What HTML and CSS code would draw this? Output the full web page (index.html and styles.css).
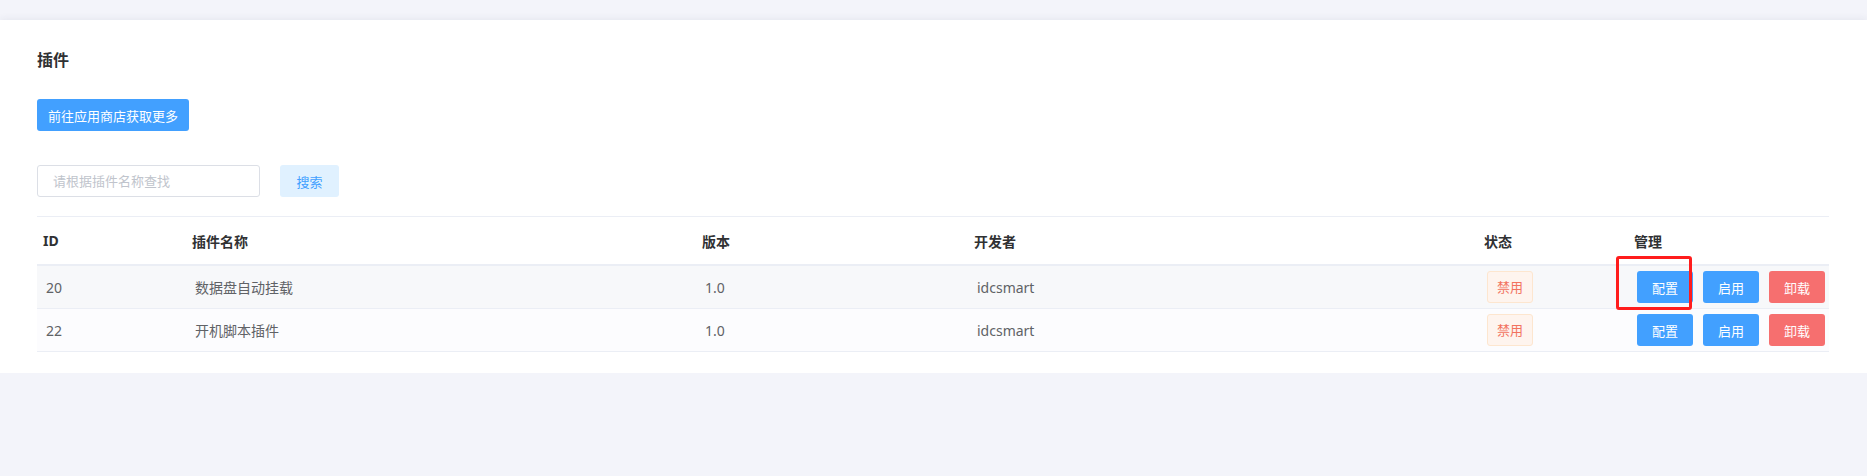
FILE: index.html
```html
<!DOCTYPE html>
<html>
<head>
  <meta charset="utf-8">
  <title>插件</title>
  <link rel="stylesheet" href="styles.css">
</head>
<body>
  <div class="card">
    <h1 class="title">插件</h1>
    <button class="btn btn-primary btn-store">前往应用商店获取更多</button>
    <div class="search-bar">
      <input type="text" class="search-input" placeholder="请根据插件名称查找">
      <button class="btn btn-search">搜索</button>
    </div>
    <table class="plugin-table">
      <colgroup>
        <col style="width: 149px">
        <col style="width: 510px">
        <col style="width: 272px">
        <col style="width: 510px">
        <col style="width: 150px">
        <col>
      </colgroup>
      <thead>
        <tr>
          <th>ID</th>
          <th>插件名称</th>
          <th>版本</th>
          <th>开发者</th>
          <th>状态</th>
          <th>管理</th>
        </tr>
      </thead>
      <tbody>
        <tr class="row-hover">
          <td>20</td>
          <td>数据盘自动挂载</td>
          <td>1.0</td>
          <td>idcsmart</td>
          <td><span class="tag-off">禁用</span></td>
          <td>
            <div class="actions">
              <span class="marked">
                <button class="btn btn-primary btn-small">配置</button>
                <span class="mark-box"></span>
              </span>
              <button class="btn btn-primary btn-small">启用</button>
              <button class="btn btn-danger btn-small">卸载</button>
            </div>
          </td>
        </tr>
        <tr>
          <td>22</td>
          <td>开机脚本插件</td>
          <td>1.0</td>
          <td>idcsmart</td>
          <td><span class="tag-off">禁用</span></td>
          <td>
            <div class="actions">
              <button class="btn btn-primary btn-small">配置</button>
              <button class="btn btn-primary btn-small">启用</button>
              <button class="btn btn-danger btn-small">卸载</button>
            </div>
          </td>
        </tr>
      </tbody>
    </table>
  </div>
</body>
</html>
```

FILE: styles.css
```css
body {
  margin: 0;
  padding-top: 20px;
  background-color: #f3f4fa;
  font-family: "Noto Sans", "Noto Sans CJK SC", sans-serif;
  color: #606266;
}

.card {
  background-color: #fff;
  padding: 28px 38px 21px 37px;
  box-shadow: 0 0 8px rgba(40, 50, 90, 0.09);
}

.title {
  margin: 0;
  font-size: 16px;
  line-height: 24px;
  font-weight: bold;
  color: #303133;
}

.btn {
  border: none;
  border-radius: 3px;
  font-family: inherit;
  cursor: pointer;
  padding: 0;
}

.btn-primary {
  background-color: #42a0ff;
  color: #fff;
}

.btn-danger {
  background-color: #f66f6f;
  color: #fff;
}

.btn-store {
  display: block;
  margin-top: 27px;
  width: 152px;
  height: 32px;
  font-size: 13px;
}

.search-bar {
  display: flex;
  gap: 20px;
  margin-top: 34px;
  margin-bottom: 19px;
}

.search-input {
  box-sizing: border-box;
  width: 223px;
  height: 32px;
  padding: 0 15px;
  border: 1px solid #dcdfe6;
  border-radius: 3px;
  font-family: inherit;
  font-size: 13px;
  outline: none;
}

.search-input::placeholder {
  color: #c0c4cc;
}

.btn-search {
  width: 59px;
  height: 32px;
  background-color: #e0f1ff;
  color: #42a0ff;
  font-size: 13px;
}

.plugin-table {
  width: 100%;
  border-collapse: collapse;
  table-layout: fixed;
  border-top: 1px solid #ebeef5;
  font-size: 14px;
}

.plugin-table th {
  height: 47px;
  padding: 0 6px;
  text-align: left;
  font-weight: bold;
  color: #303133;
  border-bottom: 2px solid #ebeef5;
}

.plugin-table td {
  height: 42px;
  padding: 0 9px;
  text-align: left;
  border-bottom: 1px solid #ebeef5;
  background-color: #fcfcfe;
}

.plugin-table td:last-child {
  padding-right: 0;
}

.plugin-table .row-hover td {
  background-color: #f7f8fa;
}

.tag-off {
  display: inline-block;
  box-sizing: border-box;
  width: 46px;
  height: 32px;
  line-height: 30px;
  text-align: center;
  font-size: 13px;
  color: #f2735f;
  background-color: #fef4ee;
  border: 1px solid #fde6cf;
  border-radius: 3px;
  vertical-align: middle;
}

.actions {
  display: flex;
  gap: 10px;
  align-items: center;
}

.btn-small {
  flex-shrink: 0;
  width: 56px;
  height: 32px;
  font-size: 13px;
}

.marked {
  position: relative;
  display: flex;
  flex-shrink: 0;
}

.mark-box {
  position: absolute;
  left: -21px;
  top: -15px;
  width: 76px;
  height: 54px;
  box-sizing: border-box;
  border: 3px solid #ff1c1c;
  border-radius: 3px;
  pointer-events: none;
}
```
